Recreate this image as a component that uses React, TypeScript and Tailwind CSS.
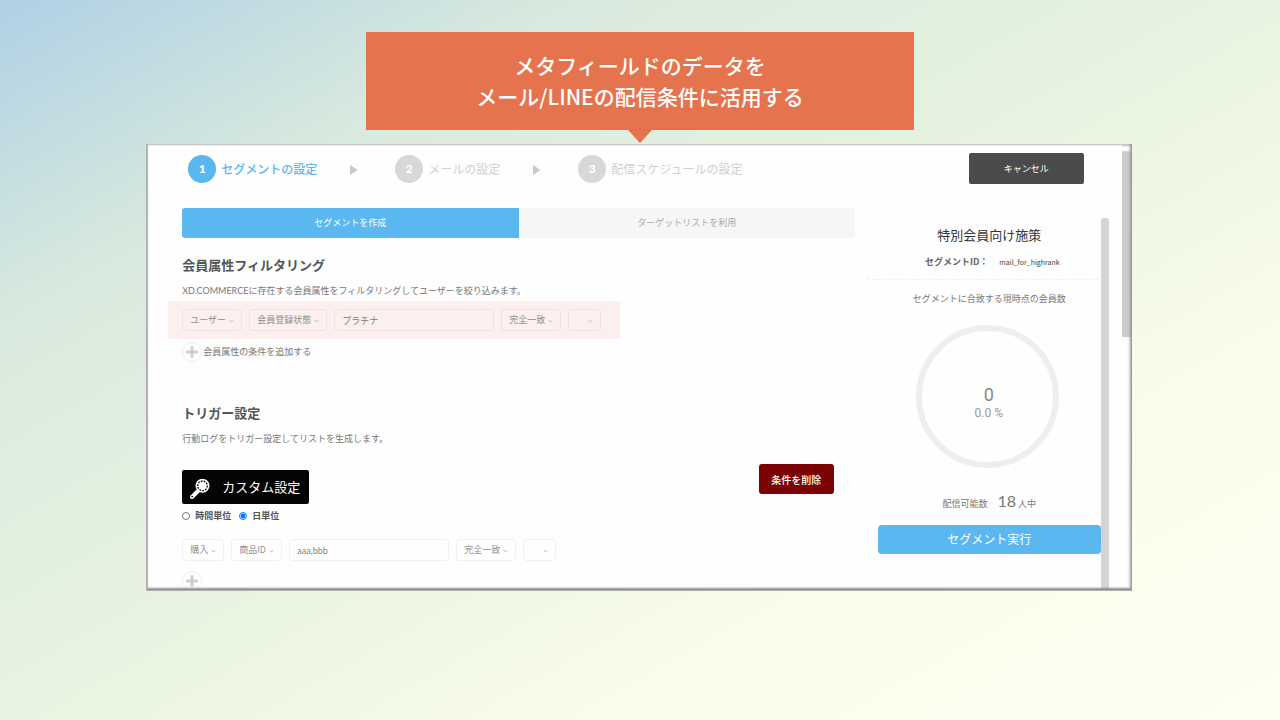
import React, { useState } from "react";

const steps = [
  { label: "セグメントの設定", circle: "bg-[#5ab7ef]", text: "text-[#5ab7ef] font-medium" },
  { label: "メールの設定", circle: "bg-[#d8d8d8]", text: "text-[#cfcfcf]" },
  { label: "配信スケジュールの設定", circle: "bg-[#d8d8d8]", text: "text-[#cfcfcf]" },
];

function Dropdown({ label, value, width }: { label: string; value: string; width: string }) {
  return (
    <div className={`relative ${width}`}>
      <select
        aria-label={label}
        className="block appearance-none w-full h-[22px] pl-[7px] rounded-[3px] border border-black/5 bg-transparent text-[9px] text-[#777]/85"
      >
        <option>{value}</option>
      </select>
      <svg viewBox="0 0 6 4" className="absolute right-2 top-[11px] w-[5px] h-[3px] pointer-events-none">
        <path d="M0.5 0.8 L3 2.2 L5.5 0.8" fill="none" stroke="#b5b5b5" strokeWidth="1.2" />
      </svg>
    </div>
  );
}

function TextField({ label, value }: { label: string; value: string }) {
  return (
    <input
      aria-label={label}
      defaultValue={value}
      className="w-40 h-[22px] px-[7px] rounded-[3px] border border-black/5 bg-transparent text-[9px] text-[#666]/85 font-[Lato,'Noto_Sans_CJK_JP',sans-serif]"
    />
  );
}

function PlusIcon() {
  return (
    <svg viewBox="0 0 20 20" className="w-5 h-5 shrink-0">
      <circle cx="10" cy="10" r="9.5" fill="#fff" stroke="#eee" />
      <path d="M10 4.2 V15.8 M4.2 10 H15.8" stroke="#cdcdcd" strokeWidth="3" />
    </svg>
  );
}

function MagnifierIcon() {
  return (
    <svg viewBox="0 0 22 22" className="w-[22px] h-[22px] shrink-0 mt-1">
      <path d="M9 13 L3 19" stroke="#fff" strokeWidth="4" strokeLinecap="round" />
      <circle cx="3.2" cy="18.6" r="0.9" fill="#050505" />
      <circle cx="13.5" cy="7.8" r="7" fill="#fff" />
      <circle cx="13.5" cy="7.8" r="4.8" fill="none" stroke="#050505" strokeWidth="1.3" strokeDasharray="1.8 1.1" />
    </svg>
  );
}

function Steps() {
  return (
    <ol className="flex items-center pl-[6px]">
      {steps.map((step, index) => (
        <li key={step.label} className="flex items-center">
          {index > 0 && (
            <svg viewBox="0 0 8 10" className="w-2 h-[10px] ml-[33px] mr-[37px] mt-[2px]">
              <path d="M0 0 L7.5 5 L0 10 Z" fill="#c8c8c8" />
            </svg>
          )}
          <span
            className={`flex items-center justify-center w-7 h-7 rounded-full text-white font-[Lato] font-black text-xs ${step.circle}`}
          >
            {index + 1}
          </span>
          <span className={`ml-[5px] text-xs whitespace-nowrap ${step.text}`}>{step.label}</span>
        </li>
      ))}
    </ol>
  );
}

function SegmentForm() {
  const [unit, setUnit] = useState("day");

  return (
    <section className="flex-1 min-w-0">
      <div className="flex h-[30px] text-[9px]">
        <button className="flex-1 rounded-l-[3px] bg-[#5ab7ef] text-white">セグメントを作成</button>
        <button className="flex-1 rounded-r-[3px] bg-[#f6f6f6] text-[#aaa]">ターゲットリストを利用</button>
      </div>

      <h2 className="mt-[17px] text-[13px] leading-5 font-bold text-[#555]">会員属性フィルタリング</h2>
      <p className="mt-2 text-[9px] leading-4 text-[#777] font-[Lato,'Noto_Sans_CJK_JP',sans-serif]">
        XD.COMMERCEに存在する会員属性をフィルタリングしてユーザーを絞り込みます。
      </p>
      <div className="mt-[2px] -ml-[14px] px-[14px] py-2 w-[452px] flex gap-[7px] bg-[#fcefed]">
        <Dropdown label="対象" value="ユーザー" width="w-[60px]" />
        <Dropdown label="属性" value="会員登録状態" width="w-[78px]" />
        <TextField label="属性の値" value="プラチナ" />
        <Dropdown label="一致条件" value="完全一致" width="w-[60px]" />
        <Dropdown label="結合条件" value="" width="w-[33px]" />
      </div>
      <button className="mt-[3px] flex items-center gap-[1px] text-[9px] text-[#777]">
        <PlusIcon />
        会員属性の条件を追加する
      </button>

      <h2 className="mt-[41px] text-[13px] leading-5 font-bold text-[#555]">トリガー設定</h2>
      <p className="mt-2 text-[9px] leading-4 text-[#777]">行動ログをトリガー設定してリストを生成します。</p>
      <div className="mt-[17px] flex items-start justify-between">
        <button className="mt-[6px] flex items-center gap-[11px] h-[34px] w-[127px] pl-[7px] rounded-[2px] bg-[#050505] text-white text-[13px]">
          <MagnifierIcon />
          カスタム設定
        </button>
        <button className="mr-[21px] h-[30px] w-[75px] rounded-[3px] bg-[#7b0303] text-white text-[10px] font-medium">
          条件を削除
        </button>
      </div>
      <div className="mt-1 flex gap-2 text-[9px] leading-4 font-bold text-[#555]">
        <label className="flex items-center gap-[5px]">
          <input type="radio" name="unit" className="w-2 h-2" checked={unit === "hour"} onChange={() => setUnit("hour")} />
          時間単位
        </label>
        <label className="flex items-center gap-[5px]">
          <input type="radio" name="unit" className="w-2 h-2" checked={unit === "day"} onChange={() => setUnit("day")} />
          日単位
        </label>
      </div>
      <div className="mt-[15px] flex gap-[7px]">
        <Dropdown label="行動" value="購入" width="w-[42px]" />
        <Dropdown label="項目" value="商品ID" width="w-[51px]" />
        <TextField label="項目の値" value="aaa,bbb" />
        <Dropdown label="一致条件" value="完全一致" width="w-[60px]" />
        <Dropdown label="結合条件" value="" width="w-[33px]" />
      </div>
      <button aria-label="条件を追加" className="mt-[10px] block">
        <PlusIcon />
      </button>
    </section>
  );
}

function Summary() {
  return (
    <aside className="ml-3 pl-[11px] pt-[17px] w-[234px] shrink-0 text-center text-[9px] text-[#777]">
      <h3 className="text-[13px] leading-5 text-[#333]">特別会員向け施策</h3>
      <div className="mt-[9px] pl-[6px] flex items-center justify-center gap-[11px] leading-4">
        <span className="font-bold text-[#666]">セグメントID：</span>
        <span className="text-[7px] text-[#444]">mail_for_highrank</span>
      </div>
      <div className="mt-[9px] -ml-[11px] -mr-2 border-t border-dashed border-[#f0f0f0]"></div>
      <p className="mt-[11px] leading-4">セグメントに合致する現時点の会員数</p>
      <div className="ml-[38px] mt-[18px] w-[143px] h-[143px] pt-3 pl-[3px] rounded-full border-[6px] border-[#eee] flex flex-col items-center justify-center font-[Roboto]">
        <span className="text-lg leading-5 text-[#888]">0</span>
        <span className="text-xs leading-4 text-[#999]">0.0 %</span>
      </div>
      <p className="mt-[23px] h-5 flex items-baseline justify-center leading-5">
        配信可能数
        <span className="ml-[10px] mr-[2px] text-base leading-5 font-[Lato]">18</span>
        人中
      </p>
      <button className="mt-[14px] h-[29px] w-full pb-[2px] rounded bg-[#5ab7ef] text-white text-xs">
        セグメント実行
      </button>
    </aside>
  );
}

export default function App() {
  return (
    <div className="min-h-screen flex flex-col items-center pt-8 pb-8 bg-[linear-gradient(to_bottom_right,#b0d0e5_0%,#d9eade_23%,#e8f4e1_50%,#f9fcea_72%,#fffff2_100%)] font-['Noto_Sans_CJK_JP',sans-serif]">
      <h1 className="w-[548px] max-w-full py-[18px] bg-[#e5734e] text-white text-[21px] leading-[31px] font-medium text-center">
        メタフィールドのデータを
        <br />
        メール/LINEの配信条件に活用する
      </h1>
      <svg viewBox="0 0 24 13" className="w-6 h-[13px]">
        <path d="M0 0 H24 L12 13 Z" fill="#e5734e" />
      </svg>

      <main className="relative mt-[1px] mr-[2px] w-[77%] min-w-[900px] bg-[#fefefe] pl-9 pr-[23px]">
        <header className="flex items-center justify-between pt-[9px] pr-[25px]">
          <Steps />
          <button className="h-[31px] w-[115px] rounded-[2px] bg-[#4b4b4b] text-white text-[9px]">キャンセル</button>
        </header>
        <div className="pt-6 flex">
          <SegmentForm />
          <Summary />
          <div className="mt-[10px] w-2 shrink-0 rounded-t-[3px] bg-[#d4d4d4]"></div>
        </div>
        {/* Scrollbar thumb and beveled frame */}
        <div className="absolute right-0 top-0 w-[10px] h-[193px] bg-[linear-gradient(to_bottom,#aaa_0,#fff_3px,#fff_6px,#cdcdcd_8px)]"></div>
        <div className="absolute inset-0 pointer-events-none shadow-[inset_2px_0_1px_#b0b0b0,inset_-1px_0_0_#999,inset_-2px_0_3px_#999,inset_0_-1px_0_#bbb,inset_0_-3px_2px_#8e8e8e,inset_0_1px_0_#e4e4e4]"></div>
      </main>
    </div>
  );
}
